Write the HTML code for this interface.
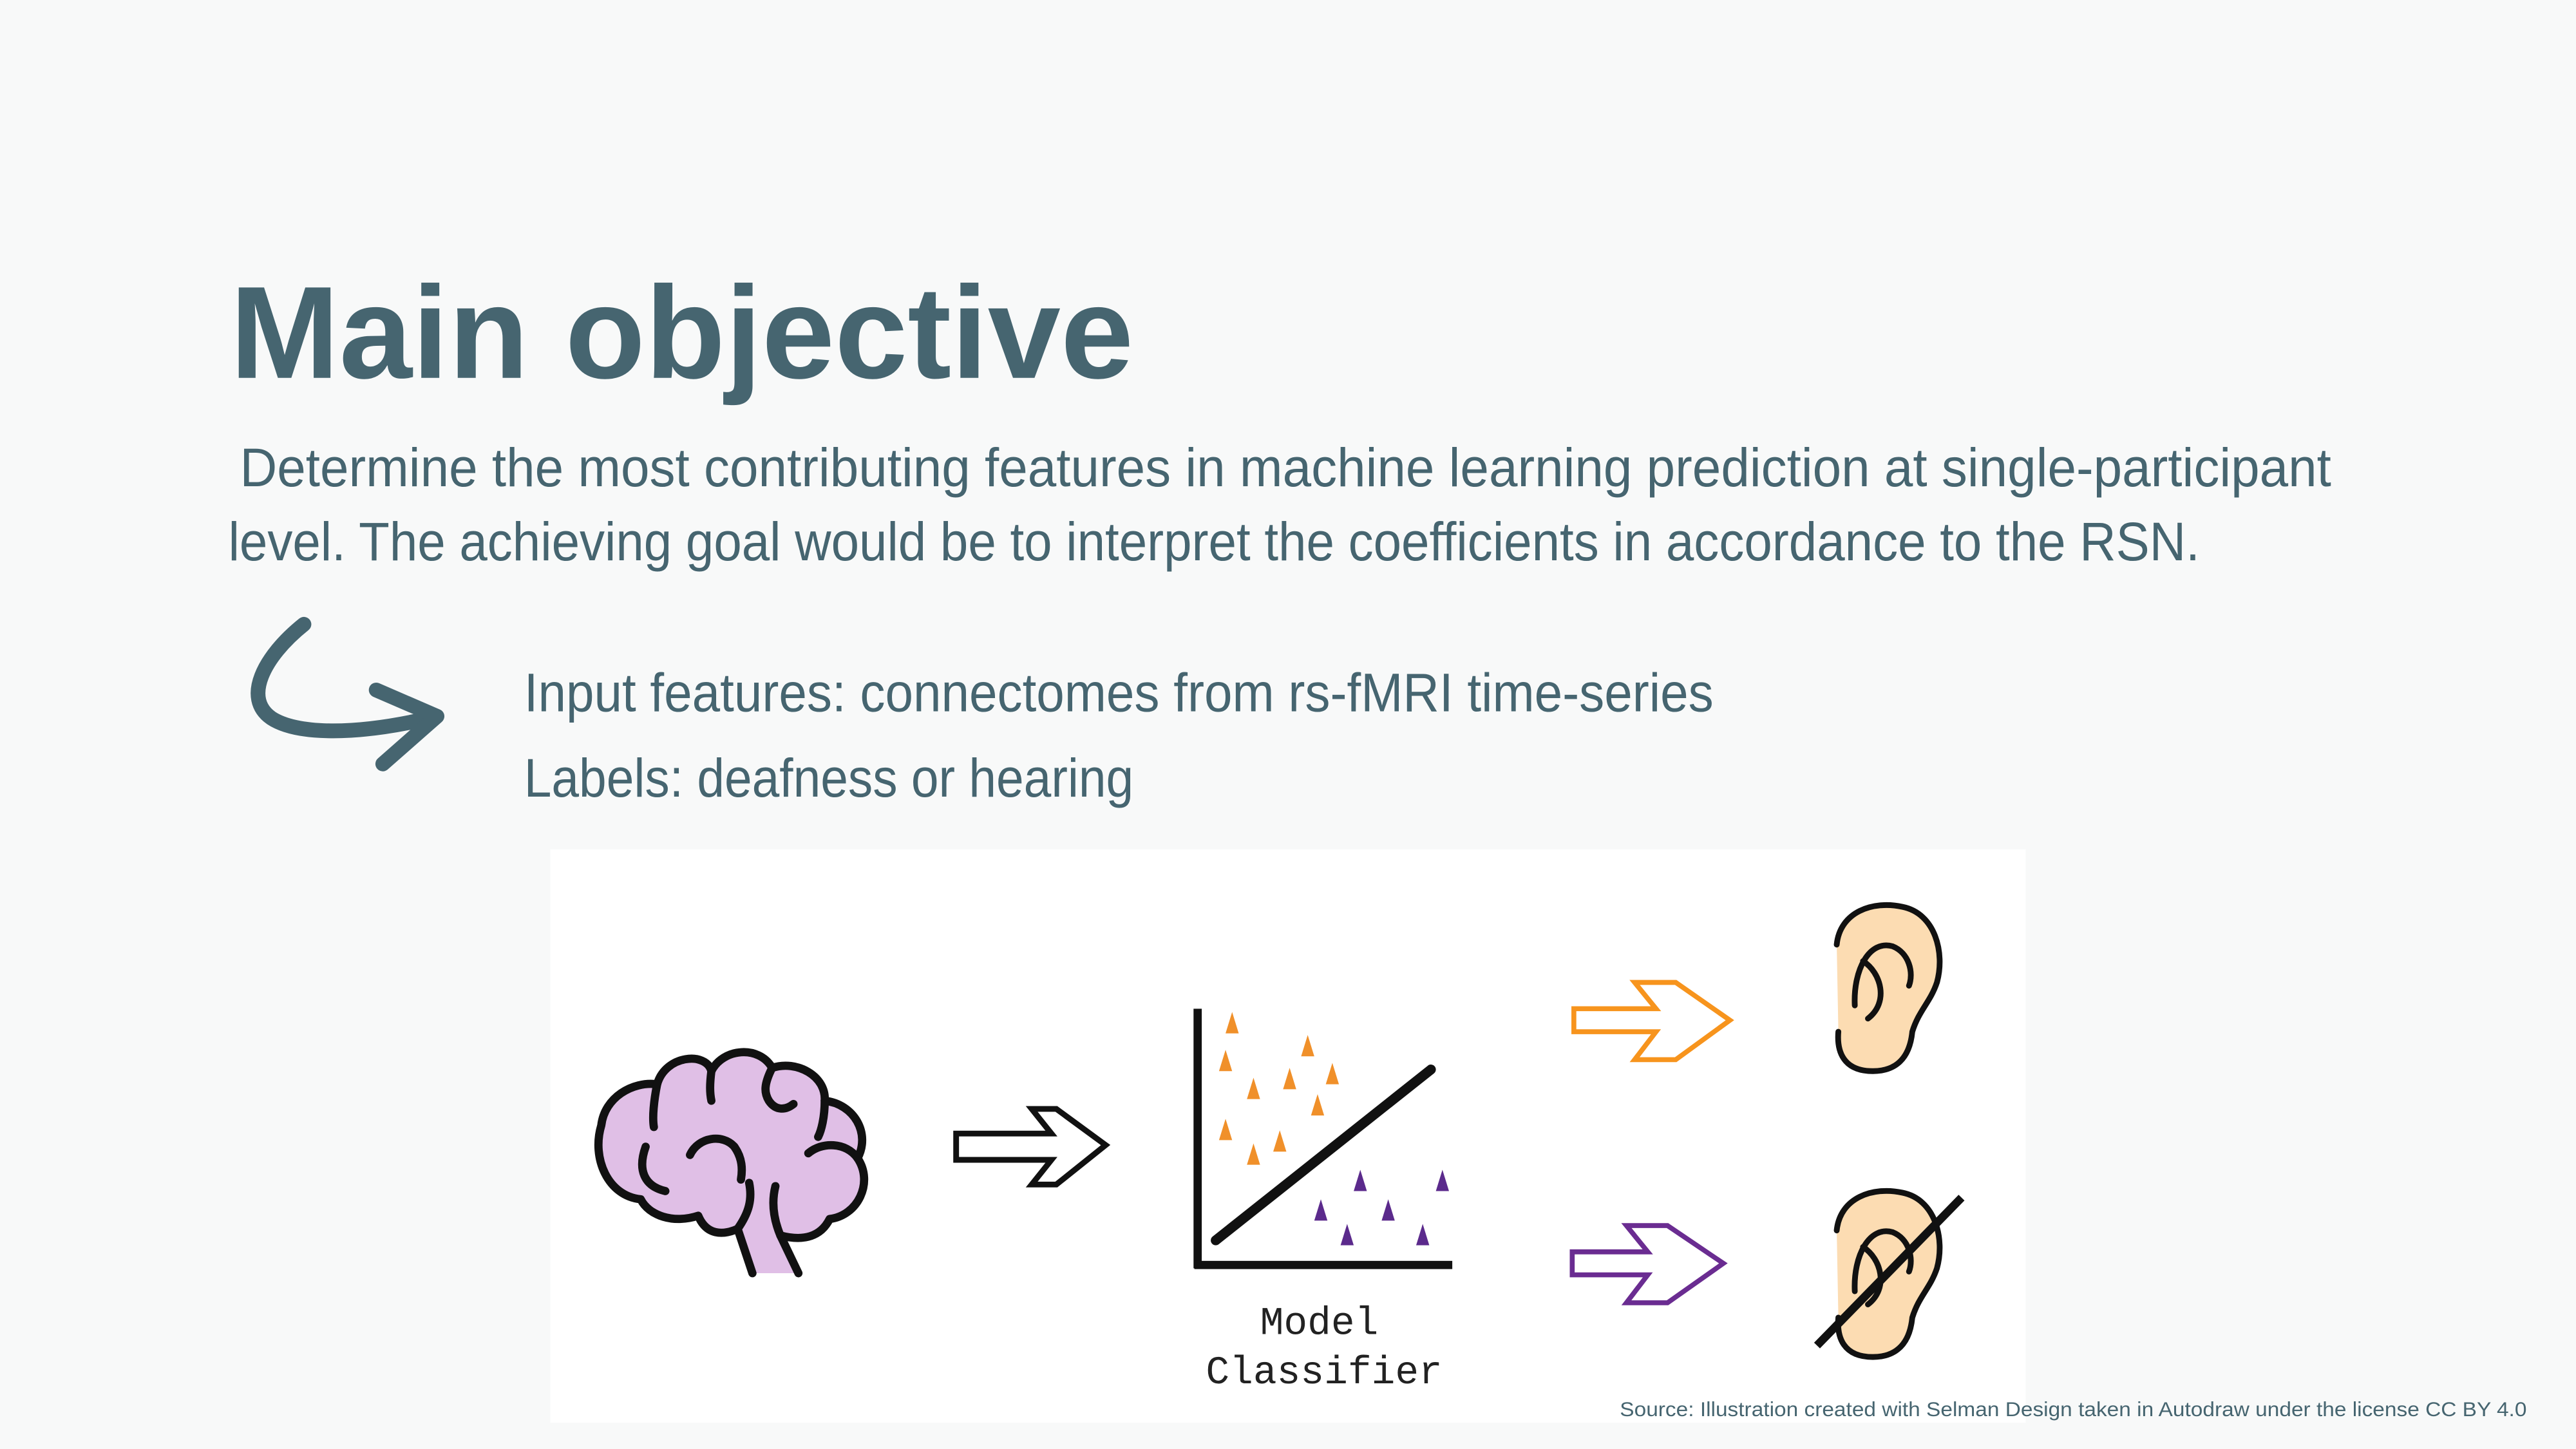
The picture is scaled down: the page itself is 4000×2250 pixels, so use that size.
<!DOCTYPE html>
<html><head><meta charset="utf-8"><style>
html,body{margin:0;padding:0;background:#f8f9f9;}
svg{display:block;}
</style></head><body>
<svg width="4000" height="2250" viewBox="0 0 1568 882" xmlns="http://www.w3.org/2000/svg">
<rect width="1568" height="882" fill="#f8f9f9"/>
<g fill="#466570" font-family="Liberation Sans, sans-serif">
<text x="140" y="230" font-size="80" font-weight="bold" textLength="550" lengthAdjust="spacingAndGlyphs">Main objective</text>
<text x="146" y="296" font-size="33" textLength="1273" lengthAdjust="spacingAndGlyphs">Determine the most contributing features in machine learning prediction at single-participant</text>
<text x="139" y="341" font-size="33" textLength="1200" lengthAdjust="spacingAndGlyphs">level. The achieving goal would be to interpret the coefficients in accordance to the RSN.</text>
<text x="319" y="433" font-size="33" textLength="724" lengthAdjust="spacingAndGlyphs">Input features: connectomes from rs-fMRI time-series</text>
<text x="319" y="485" font-size="33" textLength="371" lengthAdjust="spacingAndGlyphs">Labels: deafness or hearing</text>
</g>
<g fill="none" stroke="#466570" stroke-linecap="round" stroke-linejoin="round">
<path d="M185 380 C160 400 148 425 165 437 C180 447 215 448 262 437" stroke-width="9"/>
<path d="M229 420 L266 436 L233 465" stroke-width="9"/>
</g>
<rect x="335" y="517" width="898" height="349" fill="#ffffff"/>
<g stroke="#111" stroke-width="5" stroke-linecap="round" stroke-linejoin="round">
<path d="M458 775 L449 748 C440 752 430 752 425 740 C410 745 395 740 390 730 C370 728 360 705 366 685 C368 668 385 658 400 660 C405 642 430 640 433 652 C440 638 462 636 470 650 C485 645 503 655 502 670 C520 672 530 690 522 705 C532 720 522 740 505 742 C500 752 490 756 475 752 L486 775" fill="#e0bfe6"/>
<path d="M400 660 C398 670 397 680 398 686" fill="none"/>
<path d="M433 652 C432 660 432 665 433 670" fill="none"/>
<path d="M470 650 C465 660 465 665 468 670 C472 676 478 676 483 672" fill="none"/>
<path d="M502 670 C502 680 500 688 498 692" fill="none"/>
<path d="M522 705 C515 695 500 695 492 702" fill="none"/>
<path d="M393 698 C388 712 392 722 405 725" fill="none"/>
<path d="M420 703 C425 692 440 690 447 698 C452 705 452 712 451 718" fill="none"/>
<path d="M475 752 C470 740 470 730 472 722" fill="none"/>
<path d="M449 748 C456 738 458 730 456 720" fill="none"/>
</g>
<path d="M582 690 L640 690 L628 675 L643 675 L673 697 L643 721 L628 721 L640 706 L582 706 Z" fill="#fff" stroke="#111" stroke-width="3.5"/>
<g stroke="#111">
<line x1="729" y1="614" x2="729" y2="772" stroke-width="5"/>
<line x1="727" y1="770" x2="884" y2="770" stroke-width="5"/>
<line x1="740" y1="755" x2="871" y2="651" stroke-width="6" stroke-linecap="round"/>
</g>
<g fill="#f0902a">
<path d="M750 616 l-4 13 h8z"/><path d="M796 630 l-4 13 h8z"/><path d="M746 639 l-4 13 h8z"/><path d="M785 650 l-4 13 h8z"/><path d="M811 647 l-4 13 h8z"/><path d="M763 656 l-4 13 h8z"/><path d="M802 666 l-4 13 h8z"/><path d="M746 681 l-4 13 h8z"/><path d="M779 688 l-4 13 h8z"/><path d="M763 696 l-4 13 h8z"/>
</g>
<g fill="#5b2a8c">
<path d="M828 712 l-4 13 h8z"/><path d="M878 712 l-4 13 h8z"/><path d="M804 730 l-4 13 h8z"/><path d="M845 730 l-4 13 h8z"/><path d="M820 745 l-4 13 h8z"/><path d="M866 745 l-4 13 h8z"/>
</g>
<g font-family="Liberation Mono, monospace" font-size="24" fill="#222" text-anchor="middle">
<text x="803" y="812">Model</text>
<text x="806" y="842">Classifier</text>
</g>
<path d="M958 614 L1008 614 L995 598 L1020 598 L1053 621 L1020 645 L995 645 L1008 628 L958 628 Z" fill="none" stroke="#f7941d" stroke-width="3"/>
<path d="M957 762 L1003 762 L990 746 L1015 746 L1049 769 L1015 793 L990 793 L1003 776 L957 776 Z" fill="none" stroke="#6a2c91" stroke-width="3"/>
<g id="ear" stroke="#111" stroke-width="3.5" fill="none" stroke-linecap="round">
<path d="M1118 575 C1120 555 1140 548 1158 552 C1178 556 1184 580 1179 598 C1175 610 1168 615 1164 628 C1162 648 1150 652 1140 652 C1122 652 1118 640 1119 628 L1118 575 Z" fill="#fcdcb2" stroke="none"/>
<path d="M1118 575 C1120 555 1140 548 1158 552 C1178 556 1184 580 1179 598 C1175 610 1168 615 1164 628 C1162 648 1150 652 1140 652 C1122 652 1118 640 1119 628"/>
<path d="M1129 612 C1128 590 1138 572 1152 576 C1162 580 1165 592 1162 600"/>
<path d="M1134 585 C1145 592 1150 610 1137 620"/>
</g>
<use href="#ear" transform="translate(0,174)"/>
<line x1="1106" y1="819" x2="1194" y2="729" stroke="#111" stroke-width="5"/>
<text x="986" y="862" font-family="Liberation Sans, sans-serif" font-size="12.5" fill="#466570" textLength="552" lengthAdjust="spacingAndGlyphs">Source: Illustration created with Selman Design taken in Autodraw under the license CC BY 4.0</text>
</svg>
</body></html>
